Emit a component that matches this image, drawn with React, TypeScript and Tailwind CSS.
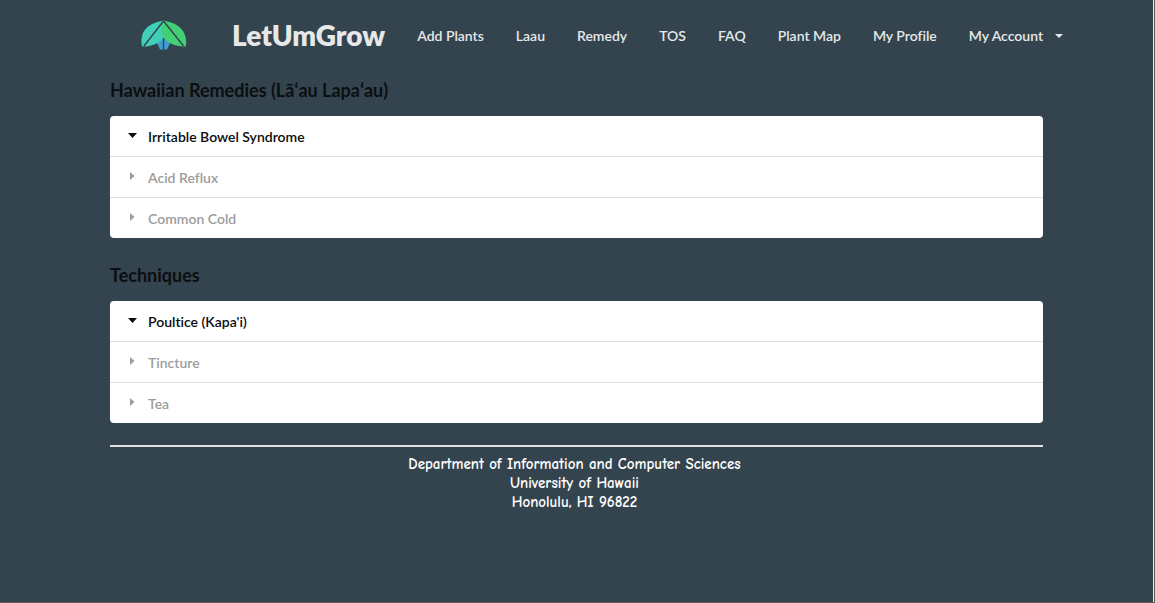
import { useState } from "react";

const navLinks = ["Add Plants", "Laau", "Remedy", "TOS", "FAQ", "Plant Map", "My Profile"];

function Logo() {
  return (
    <svg viewBox="0 0 46 30" className="h-[30px] w-[46px]" aria-hidden="true">
      <path d="M22.5 13 L30 21 L26 29.5 H19 L15 21 Z" fill="#3f9fd0" />
      <path d="M22.5 0.5 C14 2 7 5 3 11 C0 16 0 22 1 26.5 C9 27 17 24 23 18 Z" fill="#40cfb8" />
      <path d="M22.5 0.5 C31 2 38 5 42 11 C45 16 46 22 44.5 26.5 C35 27 26 23 21.5 16 C20 11 20 5 22.5 0.5 Z" fill="#42cf76" />
      <path d="M22.5 1 L3 26 M22.5 1 L42.5 26 M22.5 18 V29.5" stroke="#34444e" strokeWidth="1.4" fill="none" />
    </svg>
  );
}

function Header() {
  return (
    <header className="flex h-[70px] items-center pl-[141px]">
      <a href="#home" className="flex shrink-0 items-center gap-[45px]">
        <Logo />
        <span className="text-[28px] leading-9 font-extrabold">LetUmGrow</span>
      </a>
      <nav className="ml-8 flex shrink-0 items-center gap-8 pt-[2px] text-sm font-semibold">
        {navLinks.map((label) => (
          <a key={label} href="#nav" className="hover:text-white">
            {label}
          </a>
        ))}
        <button type="button" className="flex items-center gap-3">
          My Account
          <svg viewBox="0 0 8 4" className="h-1 w-2 fill-current" aria-hidden="true">
            <path d="M0 0 H8 L4 4 Z" />
          </svg>
        </button>
      </nav>
    </header>
  );
}

function Accordion({ title, items }: { title: string; items: string[] }) {
  const [active, setActive] = useState(0);
  return (
    <section>
      <h2 className="text-lg leading-6 font-bold text-[#0b0e10]">{title}</h2>
      <div className="mt-[14px] divide-y divide-[#dededf] overflow-hidden rounded bg-white">
        {items.map((item, index) => (
          <button
            key={item}
            type="button"
            aria-expanded={index === active}
            onClick={() => setActive(index)}
            className={
              "flex w-full items-center pt-[11px] pb-[9px] pl-[18px] text-left text-sm leading-5 font-semibold " +
              (index === active ? "text-[#0c0c0d]" : "text-[#9c9c9c]")
            }
          >
            <span className="flex w-5 pb-1">
              {index === active ? (
                <svg viewBox="0 0 9 5" className="h-[5px] w-[9px] fill-current" aria-hidden="true">
                  <path d="M0 0 H9 L4.5 5 Z" />
                </svg>
              ) : (
                <svg viewBox="0 0 7 8" className="h-2 w-[7px] fill-current" aria-hidden="true">
                  <path d="M2 0 L6.5 4 L2 8 Z" />
                </svg>
              )}
            </span>
            {item}
          </button>
        ))}
      </div>
    </section>
  );
}

export default function App() {
  return (
    <div className="flex min-h-screen flex-col border-r border-b border-[#655f4c] bg-[#34444e] font-['Lato',sans-serif] text-[#e6e8e9] [font-variant-ligatures:none]">
      <div className="flex grow flex-col border-r border-[#e6e8e9]">
        <Header />
        <main className="mx-[110px] mt-2 flex flex-col gap-[25px]">
          <Accordion
            title="Hawaiian Remedies (Lāʻau Lapaʻau)"
            items={["Irritable Bowel Syndrome", "Acid Reflux", "Common Cold"]}
          />
          <Accordion title="Techniques" items={["Poultice (Kapa'i)", "Tincture", "Tea"]} />
        </main>
        <footer className="mx-[110px] mt-[22px] border-t-2 border-[#e2e2e2] pt-2 pr-1 text-center font-['Comic_Sans_MS','Comic_Neue','Open_Sans',sans-serif] text-[15px] leading-[19px] font-bold text-white">
          <p>Department of Information and Computer Sciences</p>
          <p>University of Hawaii</p>
          <p>Honolulu, HI 96822</p>
        </footer>
      </div>
    </div>
  );
}
